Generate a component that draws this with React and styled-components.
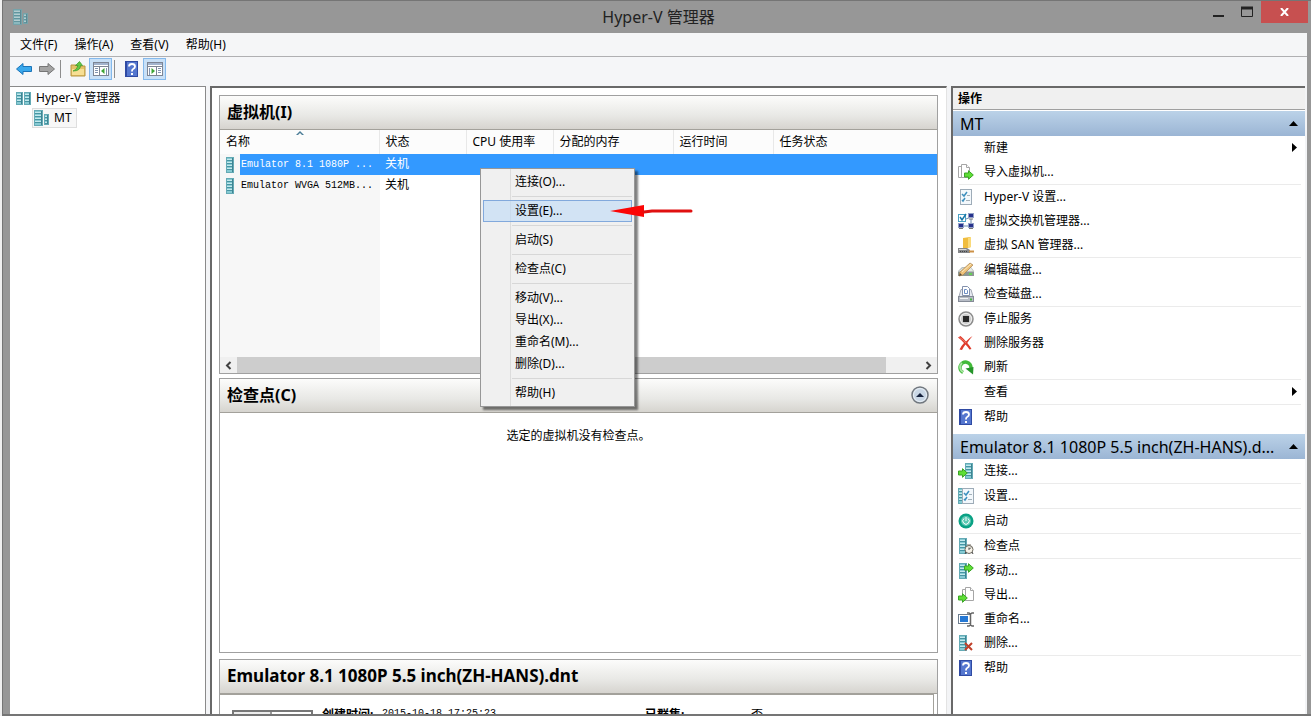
import React from "react";
import styled, { createGlobalStyle, css } from "styled-components";

const GlobalStyle = createGlobalStyle`
  * {
    box-sizing: border-box;
  }
  body {
    margin: 0;
    background: #f0f0f0;
    font-family: "Noto Sans", "Noto Sans CJK SC", sans-serif;
    font-size: 12px;
    line-height: 16px;
    color: #000;
    overflow: hidden;
  }
  button {
    font: inherit;
    color: inherit;
    border: 0;
    padding: 0;
    background: none;
  }
`;

const Window = styled.div`
  display: flex;
  flex-direction: column;
  height: 100vh;
  margin-left: 2px;
  background: #979797;
  border: solid #757575;
  border-width: 1px 0 2px 1px;
`;
const TitleBar = styled.header`
  display: flex;
  align-items: flex-start;
  height: 32px;
  flex: none;
  padding: 0 3px 0 9px;
`;
const TitleIcon = styled.div`
  width: 100px;
  padding-top: 8px;
  opacity: 0.65;
`;
const Title = styled.h1`
  flex: 1;
  margin: 0;
  padding-top: 5px;
  font-size: 16px;
  line-height: 22px;
  font-weight: 400;
  text-align: center;
  color: #222;
`;
const CaptionButtons = styled.div`
  display: flex;
`;
const CaptionButton = styled.button`
  display: flex;
  align-items: center;
  justify-content: center;
  width: ${(p) => (p.$close ? "47px" : "28px")};
  height: 22px;
  background: ${(p) => (p.$close ? "#c75050" : "transparent")};
`;
const Client = styled.div`
  flex: 1;
  min-height: 0;
  display: flex;
  flex-direction: column;
  margin: 0 4px 0 7px;
  background: #f3f4f6;
`;
const MenuBar = styled.nav`
  display: flex;
  align-items: center;
  gap: 17px;
  flex: none;
  height: 24px;
  padding: 0 10px;
  background: #f5f6f7;
  border-bottom: 1px solid #b0b0b2;
`;
const ToolBar = styled.div`
  display: flex;
  align-items: center;
  flex: none;
  height: 29px;
  padding: 0 2px 5px;
  background: #f5f6f8;
`;
const ToolButton = styled.button`
  display: flex;
  align-items: center;
  justify-content: center;
  width: 23px;
  height: 22px;
  border: 1px solid transparent;
  ${(p) =>
    p.$on &&
    css`
      background: #c8e0f7;
      border-color: #84b9ec;
    `}
`;
const ToolDivider = styled.span`
  width: 1px;
  height: 18px;
  margin: 0 5px 0 2px;
  background: #8d8d8d;
`;
const Body = styled.div`
  flex: 1;
  min-height: 0;
  display: flex;
  gap: 4px;
  padding-right: 2px;
`;
const TreePane = styled.aside`
  flex: 0 0 196px;
  background: #fff;
  border: solid #8a8a8a;
  border-width: 1px 1px 0 0;
  padding: 1px 5px;
`;
const TreeNode = styled.div`
  display: flex;
  align-items: center;
  gap: 5px;
  width: max-content;
  height: 20px;
  margin-left: ${(p) => (p.$child ? "17px" : "0")};
  padding-right: 4px;
  ${(p) =>
    p.$child &&
    css`
      background: #f7f7f7;
      border: 1px solid #dedede;
    `}
`;
const CenterPane = styled.main`
  flex: 1;
  min-width: 0;
  display: flex;
  flex-direction: column;
  gap: 4px;
  padding: 7px 8px 0 7px;
  background: #fff;
  border: solid #696969;
  border-width: 2px 0 0 2px;
  border-right: 1px solid #e3e3e3;
`;
const Panel = styled.section`
  position: relative;
  display: flex;
  flex-direction: column;
  flex: ${(p) => p.$flex};
  min-height: 0;
  border: 1px solid #a0a0a0;
  &:last-child {
    margin-top: 2px;
    border-bottom: 0;
  }
`;
const PanelHeader = styled.header`
  display: flex;
  align-items: center;
  justify-content: space-between;
  flex: none;
  height: 34px;
  padding: 0 8px 2px 7px;
  background: linear-gradient(#fcfcfb, #e8e8e5 60%, #d6d4cf);
  border-bottom: 1px solid #a3a19b;
`;
const PanelTitle = styled.h2`
  margin: 0;
  font-size: ${(p) => (p.$machine ? "17px" : "16px")};
  line-height: 22px;
  font-weight: 700;
`;
const ListArea = styled.div`
  flex: 1;
  overflow: hidden;
  background: linear-gradient(to right, #f7f7f7 160px, #fff 160px);
`;
const VmTable = styled.table`
  width: 100%;
  table-layout: fixed;
  border-collapse: collapse;
  th,
  td {
    padding: 0 0 0 6px;
    text-align: left;
    font-weight: 400;
    white-space: nowrap;
    overflow: hidden;
  }
  th {
    height: 24px;
    background: #fcfcfc;
    border-right: 1px solid #e8e8e8;
  }
  th:first-child {
    position: relative;
  }
  th:last-child {
    border-right: 0;
  }
  td {
    height: 21px;
    font-family: "Liberation Mono", "Noto Sans CJK SC", monospace;
  }
  td:first-child {
    padding: 0;
  }
`;
const SortMark = styled.svg`
  position: absolute;
  left: 76px;
  top: 1px;
`;
const VmRow = styled.tr`
  td {
    background: ${(p) => (p.$selected ? "#3399ff" : "transparent")};
    color: ${(p) => (p.$selected ? "#fff" : "#000")};
  }
`;
const VmName = styled.div`
  display: flex;
  align-items: center;
  height: 21px;
  padding-left: 2px;
  gap: 3px;
  font-size: 10px;
  background: linear-gradient(to right, #f7f7f7 20px, transparent 20px);
`;
const ScrollBar = styled.div`
  display: flex;
  flex: none;
  height: 16px;
  background: #f0f0f0;
`;
const ScrollButton = styled.button`
  display: flex;
  align-items: center;
  justify-content: center;
  width: 17px;
`;
const ScrollTrack = styled.div`
  flex: 1;
  padding-right: 34px;
`;
const ScrollThumb = styled.div`
  height: 100%;
  background: #cdcdcd;
`;
const EmptyNote = styled.p`
  margin: 0;
  padding: 15px 6px;
  text-align: center;
`;
const Details = styled.div`
  display: flex;
  flex: 1;
  margin-right: 3px;
  padding: 15px 10px 0 12px;
  overflow: hidden;
  border: solid #a3a19b;
  border-width: 1px 1px 0 0;
`;
const Thumbnail = styled.div`
  width: 81px;
  height: 60px;
  margin-right: 9px;
  border: 2px solid #777;
  border-bottom: 0;
  background: linear-gradient(to right, #ececec 36px, #999 36px 38px, #fff 38px);
`;
const Facts = styled.dl`
  display: grid;
  grid-template-columns: 60px 263px 106px 1fr;
  flex: 1;
  align-content: start;
  margin: 0;
  margin-top: -3px;
  dt {
    font-weight: 700;
    white-space: nowrap;
  }
  dd {
    margin: 0;
  }
`;
const Mono = styled.span`
  display: block;
  font-family: "Liberation Mono", monospace;
  font-size: 10px;
  line-height: 14px;
`;

const ContextMenu = styled.div`
  position: absolute;
  z-index: 2;
  left: 260px;
  top: 72px;
  width: 155px;
  padding: 2px;
  background: linear-gradient(to right, #f0f0f0 29px, #dcdcdc 29px 30px, #f0f0f0 30px);
  border: 1px solid #979797;
  box-shadow: 3px 3px 2px rgba(0, 0, 0, 0.5);
`;
const MenuItem = styled.button`
  display: block;
  width: 100%;
  height: 22px;
  padding-left: 31px;
  text-align: left;
  border: 1px solid transparent;
  ${(p) =>
    p.$hot &&
    css`
      background: rgba(190, 219, 247, 0.6);
      border-color: #82a9dc;
    `}
`;
const MenuRule = styled.hr`
  height: 1px;
  margin: 3px 0 3px 29px;
  border: 0;
  background: #d7d7d7;
`;
const Pointer = styled.svg`
  position: absolute;
  left: 129px;
  top: 35px;
`;

const ActionsPane = styled.aside`
  flex: 0 0 354px;
  min-width: 0;
  background: #fff;
  border: solid #696969;
  border-width: 2px 0 0 2px;
`;
const ActionsTitle = styled.h2`
  margin: 0 0 1px;
  height: 22px;
  padding: 3px 5px;
  font-size: 12px;
  line-height: 16px;
  font-weight: 700;
  background: #f0f0f0;
  border-bottom: 1px solid #a0a0a0;
`;
const ActionGroup = styled.section`
  margin-bottom: 5px;
`;
const GroupHeader = styled.button`
  display: flex;
  align-items: center;
  justify-content: space-between;
  width: 100%;
  height: 25px;
  padding: 0 7px;
  font-size: 16px;
  line-height: 24px;
  background: linear-gradient(#bbd2e8, #9bb5d4);
  span {
    white-space: nowrap;
  }
`;
const ActionItem = styled.button`
  display: flex;
  align-items: center;
  width: 100%;
  height: 24px;
  padding: 0 7px 0 5px;
  text-align: left;
`;
const ActionIcon = styled.span`
  display: flex;
  width: 26px;
`;
const ActionLabel = styled.span`
  flex: 1;
`;
const ActionRule = styled.hr`
  height: 1px;
  margin: 0 4px 0 6px;
  border: 0;
  background: #ebebeb;
`;

const Server = ({ x = 0, y = 0, w = 8, h = 16 }) => (
  <g transform={`translate(${x} ${y})`}>
    <rect width={w} height={h} fill="#64aab5" />
    <rect x="1" y="1" width={w - 3} height={h - 2} fill="#86cad3" />
    {[2, 5, 8, 11].filter((n) => n < h - 2).map((n) => (
      <rect key={n} x="1" y={n} width={w - 3} height="1" fill="#c4e9ed" />
    ))}
    {[3, 6, 9, 12].filter((n) => n < h - 1).map((n) => (
      <rect key={n} x="1" y={n} width={w - 3} height="1" fill="#4795a3" />
    ))}
    <rect x={w - 2} y="1" width="1" height={h - 2} fill="#3f8492" />
  </g>
);
const GreenArrow = ({ x = 0, y = 0 }) => (
  <path
    transform={`translate(${x} ${y})`}
    d="M.5 3h4V.7L9.3 5 4.500 9.300V7h-4z"
    fill="#5ede35"
    stroke="#3aa425"
  />
);
const Pages = ({ x = 0 }) => (
  <g transform={`translate(${x} 0)`} fill="#fff" stroke="#a6a6a6">
    <path d="M3 2.500H.5V13.500H5" />
    <path d="M3.500 .5H8.500L11.500 3.500V13.500H3.500z" />
    <path d="M8.500 .5V3.500H11.500" />
  </g>
);
const Checklist = ({ x = 0 }) => (
  <g transform={`translate(${x} 0)`}>
    <rect x=".5" y=".5" width="11" height="15" fill="#f3f8fc" stroke="#9eacb8" />
    <path d="M2 5l2 2 3-4M2 11l1 1 2-3" fill="none" stroke="#3c8fbe" strokeWidth="1.500" />
    <path d="M7 6.500h3M6 11.500h4" stroke="#a3b0b9" />
  </g>
);

const drawings = {
  importVm: (
    <>
      <Pages />
      <GreenArrow x={6} y={6} />
    </>
  ),
  hyperSettings: <Checklist x={2} />,
  vswitch: (
    <>
      <rect x=".5" y="1.500" width="7" height="7" fill="#fff" stroke="#4ba0c4" />
      <path d="M2 4l2 3 4-6" fill="none" stroke="#1878a8" strokeWidth="1.500" />
      <path d="M13 6v5M5 13h6M8 6l5-2" stroke="#6c8bb0" fill="none" />
      <g fill="#27328c" stroke="#92a0c6">
        <rect x="10.500" y=".5" width="5" height="4" />
        <rect x="10.500" y="10.500" width="5" height="4" />
        <rect x=".5" y="10.500" width="5" height="4" />
      </g>
      <path d="M11 6h4M1 15.500h4M11 15.500h4" stroke="#777" />
    </>
  ),
  san: (
    <>
      <path d="M5 1l7-1 1 1v9l-7 2-1-1z" fill="#f0bd3f" />
      <path d="M10 1l3-1v10l-3 1z" fill="#fada7a" />
      <path d="M0 11h9l3 2v3H0z" fill="#85878a" />
      <path d="M1 12h7l1 1H1z" fill="#d8d8d8" />
      <path d="M2 14.500h8" stroke="#444" strokeDasharray="1 1" />
      <path d="M11 14.500h5" stroke="#cc9146" strokeWidth="2" />
    </>
  ),
  editDisk: (
    <>
      <path d="M0 9l4-4h9l3 4v5H0z" fill="#b9bfbd" />
      <path d="M1 9l4-3h8l2 3z" fill="#e6e9e6" />
      <path d="M0 10h16v4H0z" fill="#8d9894" />
      <path d="M11 12h3" stroke="#65d055" strokeWidth="2" />
      <path d="M1 14l1-4L12 1l3 2-10 10z" fill="#efc27a" stroke="#a98450" strokeWidth=".7" />
      <path d="M4 10l9-8" stroke="#fbe9bd" />
      <path d="M1 14l1-3 2 2z" fill="#5b4a38" />
    </>
  ),
  inspectDisk: (
    <>
      <path d="M3 3.500h10l2 7H1z" fill="#e8ebf2" stroke="#a3a8b5" />
      <path d="M4.500 .5h5l2 2v7h-7z" fill="#fff" stroke="#8390ab" />
      <path d="M6.500 3.500h2l1 1v3h-3z" fill="none" stroke="#6b8cc4" />
      <rect x=".5" y="10.500" width="15" height="5" fill="#b7bcc6" stroke="#858b97" />
      <path d="M2 12.500h8" stroke="#f2f2f2" />
      <path d="M12 13.500h2" stroke="#4ab545" strokeWidth="2" />
    </>
  ),
  stop: (
    <>
      <circle cx="8" cy="8" r="7" fill="#ededed" stroke="#8c8c8c" strokeWidth="1.500" />
      <circle cx="8" cy="8" r="5" fill="#c9c9c9" />
      <rect x="5" y="5" width="6" height="6" fill="#282828" />
    </>
  ),
  remove: (
    <>
      <path d="M0 2.500L2.500 1Q6 4 8 6.500 11 3 14.500 1 11.500 4.500 9.300 8 12 11 13.500 14L11.500 14.500Q9.500 11.500 7.500 9.500 5.500 12 4 15L1.500 14.500Q3.500 10.500 6 8 3.500 5 0 2.500z" fill="#df3b2b" />
      <path d="M1.500 2.500Q6 5 8 8" fill="none" stroke="#f28a7b" strokeWidth=".8" />
    </>
  ),
  refresh: (
    <>
      <path d="M5 13.500A5.500 5.500 0 1 1 13 9" fill="none" stroke="#42ba3a" strokeWidth="3.500" />
      <path d="M5 13A5.500 5.500 0 0 1 4 4" fill="none" stroke="#a8e4a2" strokeWidth="2" />
      <path d="M7.500 9.500L15.500 8l-.5 7.500z" fill="#25952a" />
    </>
  ),
  help: (
    <>
      <rect x="1" width="13" height="16" fill="#2f4aa3" />
      <rect x="3" y="1" width="10" height="14" fill="#5577cf" />
      <path d="M5 5.500q0-2.500 3-2.500t3 2.500q0 1.500-1.500 2.300T8 10v.5" fill="none" stroke="#fff" strokeWidth="1.800" />
      <rect x="7" y="12" width="2" height="2" fill="#fff" />
    </>
  ),
  connect: (
    <>
      <Server x={7} />
      <GreenArrow y={5} />
    </>
  ),
  settings: (
    <>
      <Server />
      <Checklist x={4} />
    </>
  ),
  start: (
    <>
      <circle cx="8" cy="8" r="7.500" fill="#0aa184" />
      <circle cx="8" cy="8" r="5" fill="#5bc8b3" />
      <path d="M6 5.500a3.200 3.200 0 1 0 4 0M8 4V8" fill="none" stroke="#fff" />
    </>
  ),
  checkpoint: (
    <>
      <Server x={1} />
      <circle cx="11" cy="11.500" r="4" fill="#f7f3e9" stroke="#6e6a60" />
      <path d="M11 9.500v2l2-2M8 14l-1 2M14 14l1 2" fill="none" stroke="#444" />
      <path d="M9 7h4" stroke="#6e6a60" />
    </>
  ),
  move: (
    <>
      <Server x={1} />
      <GreenArrow x={6} />
    </>
  ),
  exportVm: (
    <>
      <Pages x={4} />
      <GreenArrow y={6} />
    </>
  ),
  rename: (
    <>
      <rect x=".5" y="3.500" width="12" height="9" fill="#fff" stroke="#6d7d8e" />
      <rect x="2" y="5" width="8" height="6" fill="#2578d4" />
      <path d="M9 2h2l1.500 1L14 2h2M9 15h2l1.500-1 1.500 1h2M12.500 3v11" fill="none" stroke="#666" strokeWidth="1.500" />
    </>
  ),
  deleteVm: (
    <>
      <Server x={1} />
      <path d="M7 8l7 7M14 8l-7 7" stroke="#c0402a" strokeWidth="2" />
    </>
  ),
  host: (
    <>
      <Server x={1} w={9} />
      <Server x={11} y={4} w={5} h={11} />
    </>
  ),
  hosts: (
    <>
      <Server x={1} y={2} w={7} h={13} />
      <Server x={9} y={2} w={7} h={13} />
    </>
  ),
  vm: <Server x={4} />,
  back: <path d="M.5 8L7 2.500V5.500h8.500v5H7v3z" fill="#39a8ec" stroke="#1c74b8" />,
  forward: <path d="M15.500 8L9 2.500V5.500H.5v5H9v3z" fill="#a4a4a4" stroke="#767676" />,
  folderUp: (
    <>
      <path d="M1 4h5l1 1h8v10H1z" fill="#e4c166" stroke="#b89640" />
      <path d="M2 8h12v6H2z" fill="#f7df94" />
      <path d="M3 10q4-1 5-5.500L5.500 4.500 9.500 .5 12.500 4.500h-2q0 5.500-7.500 5.500z" fill="#62c844" stroke="#3a9627" strokeWidth=".7" />
    </>
  ),
  treeToggle: (
    <>
      <rect x=".5" y="1.500" width="15" height="13" fill="#fff" stroke="#7d8594" />
      <path d="M1 3h14" stroke="#a3b4ce" strokeWidth="2" />
      <path d="M1 5.500h14M6.500 6v8" stroke="#7d8594" />
      <path d="M2 7.500h3M2 9.500h3M2 11.500h3M13.500 7v7" stroke="#8294b0" />
      <path d="M11.500 7v6L8 10z" fill="#3da535" />
    </>
  ),
  actionToggle: (
    <>
      <rect x=".5" y="1.500" width="15" height="13" fill="#fff" stroke="#7d8594" />
      <path d="M1 3h14" stroke="#a3b4ce" strokeWidth="2" />
      <path d="M1 5.500h14M9.500 6v8" stroke="#7d8594" />
      <path d="M11 7.500h3M11 9.500h3M11 11.500h3M2.500 7v7" stroke="#8294b0" />
      <path d="M4.500 7v6L8 10z" fill="#3da535" />
    </>
  ),
};

const Icon = ({ name }) => (
  <svg width="16" height="16" viewBox="0 0 16 16" aria-hidden="true">
    {drawings[name]}
  </svg>
);
const Triangle = ({ right }) => (
  <svg width="9" height="10" viewBox="0 0 9 10" aria-hidden="true">
    <path d={right ? "M3 0l5 4.500L3 9z" : "M0 7l4.500-5L9 7z"} />
  </svg>
);

const columns = [
  { label: "名称", width: 159 },
  { label: "状态", width: 87 },
  { label: "CPU 使用率", width: 87 },
  { label: "分配的内存", width: 120 },
  { label: "运行时间", width: 100 },
  { label: "任务状态" },
];

const vms = [
  { name: "Emulator 8.1 1080P ...", state: "关机", selected: true },
  { name: "Emulator WVGA 512MB...", state: "关机" },
];

const contextItems = [
  ["连接(O)..."],
  ["设置(E)..."],
  ["启动(S)"],
  ["检查点(C)"],
  ["移动(V)...", "导出(X)...", "重命名(M)...", "删除(D)..."],
  ["帮助(H)"],
];

const actionGroups = [
  {
    title: "MT",
    sections: [
      [
        { label: "新建", more: true },
        { label: "导入虚拟机...", icon: "importVm" },
      ],
      [
        { label: "Hyper-V 设置...", icon: "hyperSettings" },
        { label: "虚拟交换机管理器...", icon: "vswitch" },
        { label: "虚拟 SAN 管理器...", icon: "san" },
      ],
      [
        { label: "编辑磁盘...", icon: "editDisk" },
        { label: "检查磁盘...", icon: "inspectDisk" },
      ],
      [
        { label: "停止服务", icon: "stop" },
        { label: "删除服务器", icon: "remove" },
        { label: "刷新", icon: "refresh" },
      ],
      [{ label: "查看", more: true }],
      [{ label: "帮助", icon: "help" }],
    ],
  },
  {
    title: "Emulator 8.1 1080P 5.5 inch(ZH-HANS).d...",
    sections: [
      [{ label: "连接...", icon: "connect" }],
      [{ label: "设置...", icon: "settings" }],
      [{ label: "启动", icon: "start" }],
      [{ label: "检查点", icon: "checkpoint" }],
      [
        { label: "移动...", icon: "move" },
        { label: "导出...", icon: "exportVm" },
        { label: "重命名...", icon: "rename" },
        { label: "删除...", icon: "deleteVm" },
      ],
      [{ label: "帮助", icon: "help" }],
    ],
  },
];

const VmContextMenu = () => (
  <ContextMenu role="menu">
    {contextItems.map((group, i) => (
      <React.Fragment key={group[0]}>
        {i > 0 && <MenuRule />}
        {group.map((label) => (
          <MenuItem key={label} role="menuitem" $hot={label.startsWith("设置")}>
            {label}
          </MenuItem>
        ))}
      </React.Fragment>
    ))}
    <Pointer width="84" height="14" viewBox="0 0 84 14" aria-hidden="true">
      <path d="M0 7L34 1V13z" fill="#fb0505" />
      <path d="M34 8l8-1h39" fill="none" stroke="#e01010" strokeWidth="3" strokeLinecap="round" />
    </Pointer>
  </ContextMenu>
);

const VmPanel = () => (
  <Panel $flex="0 0 279px">
    <PanelHeader>
      <PanelTitle>虚拟机(I)</PanelTitle>
    </PanelHeader>
    <ListArea>
      <VmTable>
        <colgroup>
          {columns.map((c) => (
            <col key={c.label} width={c.width} />
          ))}
        </colgroup>
        <thead>
          <tr>
            {columns.map((c, i) => (
              <th key={c.label}>
                {c.label}
                {i === 0 && (
                  <SortMark width="8" height="4" viewBox="0 0 8 4">
                    <path d="M0 4l4-4 4 4H6L4 2 2 4z" fill="#4a7c96" />
                  </SortMark>
                )}
              </th>
            ))}
          </tr>
        </thead>
        <tbody>
          {vms.map((vm) => (
            <VmRow key={vm.name} $selected={vm.selected}>
              <td>
                <VmName>
                  <Icon name="vm" />
                  <span>{vm.name}</span>
                </VmName>
              </td>
              <td>{vm.state}</td>
              <td colSpan={4} />
            </VmRow>
          ))}
        </tbody>
      </VmTable>
    </ListArea>
    <ScrollBar>
      <ScrollButton aria-label="向左滚动">
        <svg width="7" height="9" viewBox="0 0 7 9">
          <path d="M5.500 1L2 4.500 5.500 8" fill="none" stroke="#404040" strokeWidth="2" />
        </svg>
      </ScrollButton>
      <ScrollTrack>
        <ScrollThumb />
      </ScrollTrack>
      <ScrollButton aria-label="向右滚动">
        <svg width="7" height="9" viewBox="0 0 7 9">
          <path d="M1.500 1L5 4.500 1.500 8" fill="none" stroke="#404040" strokeWidth="2" />
        </svg>
      </ScrollButton>
    </ScrollBar>
    <VmContextMenu />
  </Panel>
);

const Actions = () => (
  <ActionsPane>
    <ActionsTitle>操作</ActionsTitle>
    {actionGroups.map((group) => (
      <ActionGroup key={group.title}>
        <GroupHeader>
          <span>{group.title}</span>
          <Triangle />
        </GroupHeader>
        {group.sections.map((items, i) => (
          <React.Fragment key={items[0].label}>
            {i > 0 && <ActionRule />}
            {items.map((item) => (
              <ActionItem key={item.label}>
                <ActionIcon>{item.icon && <Icon name={item.icon} />}</ActionIcon>
                <ActionLabel>{item.label}</ActionLabel>
                {item.more && <Triangle right />}
              </ActionItem>
            ))}
          </React.Fragment>
        ))}
      </ActionGroup>
    ))}
  </ActionsPane>
);

const App = () => (
  <>
    <GlobalStyle />
    <Window>
      <TitleBar>
        <TitleIcon>
          <Icon name="host" />
        </TitleIcon>
        <Title>Hyper-V 管理器</Title>
        <CaptionButtons>
          <CaptionButton aria-label="最小化">
            <svg width="12" height="12" viewBox="0 0 12 12">
              <path d="M0 10h11" stroke="#222" strokeWidth="2" />
            </svg>
          </CaptionButton>
          <CaptionButton aria-label="最大化">
            <svg width="12" height="12" viewBox="0 0 12 12">
              <path d="M.5 2v8.500h11V2" fill="none" stroke="#222" />
              <path d="M0 2h12" stroke="#222" strokeWidth="3" />
            </svg>
          </CaptionButton>
          <CaptionButton $close aria-label="关闭">
            <svg width="9" height="8" viewBox="0 0 9 8">
              <path d="M1 0l7 8M8 0L1 8" stroke="#fff" strokeWidth="2" />
            </svg>
          </CaptionButton>
        </CaptionButtons>
      </TitleBar>
      <Client>
        <MenuBar>
          <button>文件(F)</button>
          <button>操作(A)</button>
          <button>查看(V)</button>
          <button>帮助(H)</button>
        </MenuBar>
        <ToolBar>
          <ToolButton aria-label="后退"><Icon name="back" /></ToolButton>
          <ToolButton aria-label="前进"><Icon name="forward" /></ToolButton>
          <ToolDivider />
          <ToolButton aria-label="上一级"><Icon name="folderUp" /></ToolButton>
          <ToolButton $on aria-label="控制台树"><Icon name="treeToggle" /></ToolButton>
          <ToolDivider />
          <ToolButton aria-label="帮助"><Icon name="help" /></ToolButton>
          <ToolButton $on aria-label="操作窗格"><Icon name="actionToggle" /></ToolButton>
        </ToolBar>
        <Body>
          <TreePane>
            <TreeNode>
              <Icon name="hosts" />
              Hyper-V 管理器
            </TreeNode>
            <TreeNode $child>
              <Icon name="host" />
              MT
            </TreeNode>
          </TreePane>
          <CenterPane>
            <VmPanel />
            <Panel $flex="1">
              <PanelHeader>
                <PanelTitle>检查点(C)</PanelTitle>
                <button aria-label="折叠">
                  <svg width="18" height="18" viewBox="0 0 18 18" display="block">
                    <circle cx="9" cy="9" r="8" fill="#e3ebf3" stroke="#70777e" strokeWidth="1.500" />
                    <circle cx="9" cy="9" r="6" fill="#c9d7e5" />
                    <path d="M5 11l4-4 4 4z" fill="#14213c" />
                  </svg>
                </button>
              </PanelHeader>
              <EmptyNote>选定的虚拟机没有检查点。</EmptyNote>
            </Panel>
            <Panel $flex="0 0 55px">
              <PanelHeader>
                <PanelTitle $machine>Emulator 8.1 1080P 5.5 inch(ZH-HANS).dnt</PanelTitle>
              </PanelHeader>
              <Details>
                <Thumbnail />
                <Facts>
                  <dt>创建时间:</dt>
                  <dd><Mono>2015-10-18 17:25:23</Mono></dd>
                  <dt>已群集:</dt>
                  <dd>否</dd>
                </Facts>
              </Details>
            </Panel>
          </CenterPane>
          <Actions />
        </Body>
      </Client>
    </Window>
  </>
);

export default App;
